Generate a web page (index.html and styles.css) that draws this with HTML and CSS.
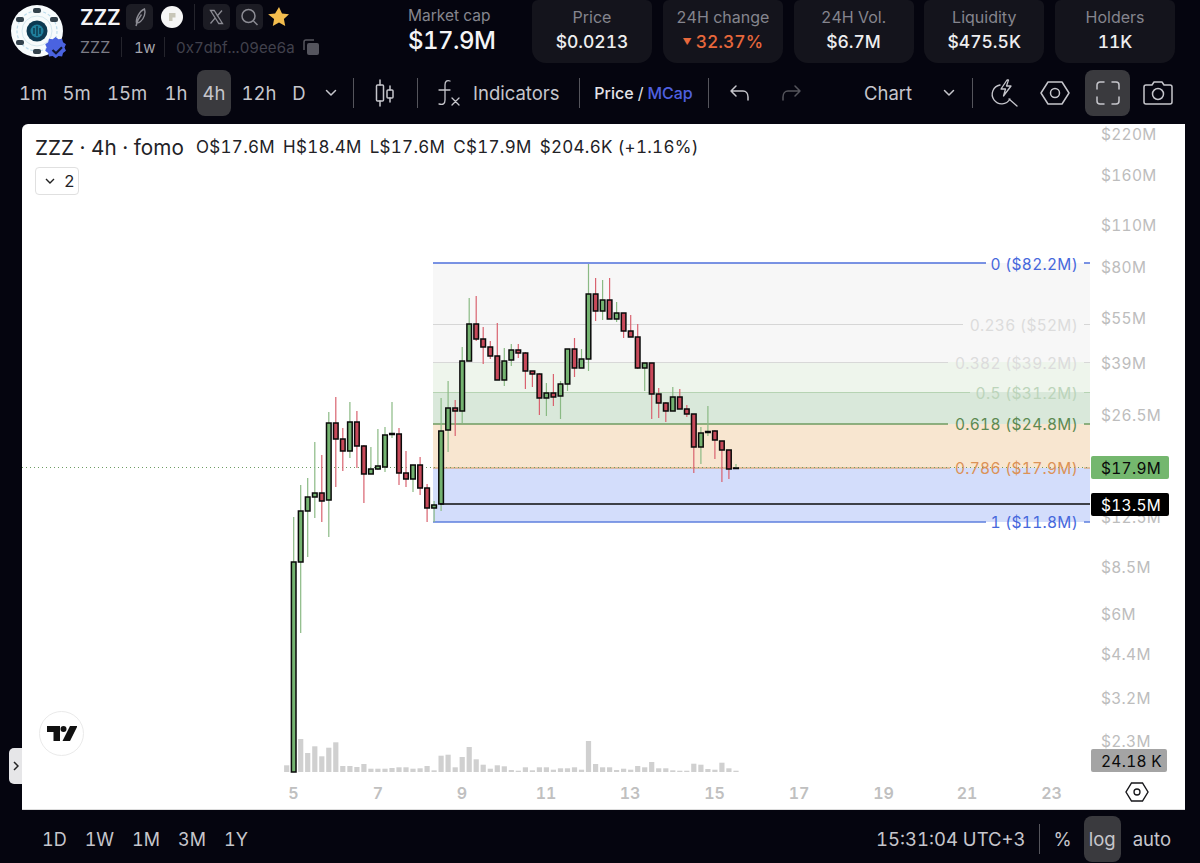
FILE: index.html
```html
<!DOCTYPE html>
<html lang="en">
<head>
<meta charset="utf-8">
<title>ZZZ chart</title>
<link rel="stylesheet" href="styles.css">
</head>
<body>
<header class="topbar">
  <div class="logo">
    <svg viewBox="0 0 56 56" width="56" height="56">
      <circle cx="26" cy="26" r="26" fill="#f7fbfc"/>
      <circle cx="26" cy="26" r="20" fill="none" stroke="#bcdcec" stroke-width="1.2" stroke-dasharray="3 2"/>
      <circle cx="26" cy="26" r="15" fill="none" stroke="#d5e8ef" stroke-width="1"/>
      <circle cx="26" cy="26" r="10.5" fill="#0d3a52"/>
      <circle cx="26" cy="26" r="6.5" fill="#1f7f9c"/>
      <path d="M26 21v10M23 23v6M29 23v6" stroke="#0a2a3c" stroke-width="1.2"/>
      <g fill="#33424c">
        <rect x="22" y="3" width="8" height="5" rx="2"/>
        <rect x="5" y="12" width="8" height="5" rx="2"/>
        <rect x="39" y="12" width="8" height="5" rx="2"/>
        <rect x="5" y="35" width="8" height="5" rx="2"/>
        <rect x="22" y="44" width="8" height="5" rx="2"/>
      </g>
      <path d="M47 34l3 2.300 3.700-.5 1 3.600 3 2.100-1.500 3.400 1.500 3.400-3 2.100-1 3.600-3.700-.5-3 2.300-3-2.300-3.700.5-1-3.600-3-2.100 1.500-3.400-1.500-3.400 3-2.100 1-3.600 3.700.5z" transform="translate(-1 -1) scale(.97)" fill="#4a63e0"/>
      <path d="M41.500 45l3.500 3.300 6-6" fill="none" stroke="#10152e" stroke-width="2.200"/>
    </svg>
  </div>
  <div class="token">
    <div class="token-top">
      <strong class="token-name">ZZZ</strong>
      <span class="icon-box">
        <svg viewBox="0 0 27 26" width="27" height="26"><path d="M18.500 5c1.500 4-.5 9.500-4 12.500-1.300 1.100-2.800 1.500-4 1.300-.9-4.300 3-11.800 8-13.800zM10 22c.9-4.500 3-8.500 5.500-11.500" fill="none" stroke="#8c8c94" stroke-width="1.400"/></svg>
      </span>
      <span class="icon-plain pump">
        <svg viewBox="0 0 22 22" width="22" height="22"><circle cx="11" cy="11" r="11" fill="#f6f6f6"/><path d="M8 7h6.500v4.500h-3V15H8z" fill="#c8c6b8"/></svg>
      </span>
      <i class="vline faint"></i>
      <span class="icon-box">
        <svg viewBox="0 0 27 26" width="27" height="26"><path d="M7.500 6.500h3.700l8.300 13h-3.700zM19 6.500l-5 5.700M12.300 13.800L7.500 19.500" fill="none" stroke="#8c8c94" stroke-width="1.300"/></svg>
      </span>
      <span class="icon-box">
        <svg viewBox="0 0 27 26" width="27" height="26"><circle cx="12.500" cy="12" r="6.500" fill="none" stroke="#8c8c94" stroke-width="1.500"/><path d="M17.500 17l4 4" stroke="#8c8c94" stroke-width="1.500"/></svg>
      </span>
      <span class="icon-plain star">
        <svg viewBox="0 0 22 22" width="22" height="22"><path d="M11 1l3 6.400 7 .9-5.100 4.800 1.300 6.900-6.200-3.400-6.200 3.400 1.300-6.900L.1 8.300l7-.9z" fill="#f3bd4e"/></svg>
      </span>
    </div>
    <div class="token-sub">
      <span class="sub-name">ZZZ</span>
      <i class="vline faint short"></i>
      <span class="sub-age">1w</span>
      <i class="vline faint short"></i>
      <span class="sub-addr">0x7dbf...09ee6a</span>
      <svg class="copy" viewBox="0 0 17 17" width="17" height="17"><path d="M1 11V3a2 2 0 0 1 2-2h8" fill="none" stroke="#55555e" stroke-width="1.500"/><rect x="4" y="4" width="12" height="12" rx="2" fill="#55555e"/></svg>
    </div>
  </div>
  <div class="mcap">
    <span class="mcap-label">Market cap</span>
    <span class="mcap-value">$17.9M</span>
  </div>
  <div class="cards">
    <div class="card"><span class="card-label">Price</span><span class="card-value">$0.0213</span></div>
    <div class="card"><span class="card-label">24H change</span><span class="card-value down"><small>▼</small>32.37%</span></div>
    <div class="card"><span class="card-label">24H Vol.</span><span class="card-value">$6.7M</span></div>
    <div class="card"><span class="card-label">Liquidity</span><span class="card-value">$475.5K</span></div>
    <div class="card"><span class="card-label">Holders</span><span class="card-value">11K</span></div>
  </div>
</header>

<nav class="toolbar">
  <span class="tool">1m</span>
  <span class="tool">5m</span>
  <span class="tool">15m</span>
  <span class="tool">1h</span>
  <span class="tool active">4h</span>
  <span class="tool">12h</span>
  <span class="tool">D</span>
  <span class="tool"><svg viewBox="0 0 12 8" width="12" height="8"><path d="M1.500 1.500L6 6l4.500-4.500" class="ln"/></svg></span>
  <i class="vline"></i>
  <span class="tool">
    <svg viewBox="0 0 24 30" width="24" height="30"><path d="M7 2v5M7 23v5M17 8v4M17 20v4" class="ln"/><rect x="3.500" y="7" width="7" height="16" rx="1" class="ln"/><rect x="14" y="12" width="6" height="8" rx="1" class="ln"/></svg>
  </span>
  <i class="vline"></i>
  <span class="tool indicators">
    <svg viewBox="0 0 28 30" width="28" height="30"><path d="M15 3c-3-1-5 0-5 4v15c0 4-2 5-6 4M4 12h11M17 20l7 7M24 20l-7 7" class="ln thin"/></svg>
    <span>Indicators</span>
  </span>
  <i class="vline"></i>
  <span class="tool price-switch"><b>Price</b> / <b class="blue">MCap</b></span>
  <i class="vline"></i>
  <span class="tool"><svg viewBox="0 0 22 18" width="22" height="18"><path d="M7 2L2 7l5 5M2 7h12c3 0 5 2.500 5 6v3" class="ln"/></svg></span>
  <span class="tool"><svg viewBox="0 0 22 18" width="22" height="18"><path d="M15 2l5 5-5 5M20 7H8c-3 0-5 2.500-5 6v3" class="ln dim"/></svg></span>
  <span class="tool chart-select">
    <span>Chart</span>
    <svg viewBox="0 0 12 8" width="12" height="8"><path d="M1.500 1.500L6 6l4.500-4.500" class="ln"/></svg>
  </span>
  <i class="vline"></i>
  <span class="tool"><svg viewBox="0 0 28 30" width="28" height="30"><path d="M10 7a9.500 9.500 0 1 0 10 14M19 21l8 7" class="ln thin"/><path d="M17 2l-6 9h4.500l-2 7 7.500-10h-4.500l2-6z" class="ln thin"/></svg></span>
  <span class="tool"><svg viewBox="0 0 30 26" width="30" height="26"><path d="M8 2h14l7 11-7 11H8L1 13z" class="ln"/><circle cx="15" cy="13" r="4.500" class="ln"/></svg></span>
  <span class="tool full active"><svg viewBox="0 0 24 24" width="24" height="24"><path d="M1 8V4a3 3 0 0 1 3-3h4M16 1h4a3 3 0 0 1 3 3v4M23 16v4a3 3 0 0 1-3 3h-4M8 23H4a3 3 0 0 1-3-3v-4" class="ln"/></svg></span>
  <span class="tool"><svg viewBox="0 0 30 26" width="30" height="26"><path d="M3 5h6l2-3h8l2 3h6a2 2 0 0 1 2 2v15a2 2 0 0 1-2 2H3a2 2 0 0 1-2-2V7a2 2 0 0 1 2-2z" class="ln"/><circle cx="15" cy="14" r="5.500" class="ln"/></svg></span>
</nav>

<main class="chart">
  <svg class="plot" viewBox="22 124 1163 686" width="1163" height="686">
    <g id="fib">
      <rect x="433" y="263" width="657" height="99" fill="#f7f7f7"/>
      <rect x="433" y="362" width="657" height="30" fill="#eef5ec"/>
      <rect x="433" y="392" width="657" height="32" fill="#d9e8da"/>
      <rect x="433" y="424" width="657" height="44" fill="#f8e6d0"/>
      <rect x="433" y="468" width="657" height="54" fill="#d3ddfb"/>
      <path d="M433 263H986M1084 263h6" stroke="#4f70dc" stroke-width="1.500" fill="none"/>
      <path d="M433 324.500H963M1084 324.500h6" stroke="#d6d6d6" fill="none"/>
      <path d="M433 362.500H948M1084 362.500h6" stroke="#d8d8d8" fill="none"/>
      <path d="M433 392.500H970M1084 392.500h6" stroke="#b6d3b3" fill="none"/>
      <path d="M433 424H948M1084 424h6" stroke="#6f9c61" stroke-width="1.500" fill="none"/>
      <path d="M433 468H950M1084 468h6" stroke="#d9985a" stroke-width="1.200" fill="none"/>
      <path d="M433 522H986M1084 522h6" stroke="#5f80de" stroke-width="1.500" fill="none"/>
    </g>
    <path d="M22 467.500H1090" stroke="#6c9c62" stroke-dasharray="1 3" fill="none"/>
    <g id="volume"></g>
    <g id="candles"></g>
    <path d="M440 504H1090" stroke="#0b0b0b" stroke-width="1.500" fill="none"/>

    <g class="fib-labels">
      <text x="1078" y="264" class="f0">0 ($82.2M)</text>
      <text x="1078" y="325" class="f236">0.236 ($52M)</text>
      <text x="1078" y="363" class="f382">0.382 ($39.2M)</text>
      <text x="1078" y="393" class="f5">0.5 ($31.2M)</text>
      <text x="1078" y="424.500" class="f618">0.618 ($24.8M)</text>
      <text x="1078" y="468.500" class="f786">0.786 ($17.9M)</text>
      <text x="1078" y="522.500" class="f0">1 ($11.8M)</text>
    </g>

    <g class="price-axis">
      <text x="1101" y="134">$220M</text>
      <text x="1101" y="175">$160M</text>
      <text x="1101" y="225">$110M</text>
      <text x="1101" y="267">$80M</text>
      <text x="1101" y="318">$55M</text>
      <text x="1101" y="363">$39M</text>
      <text x="1101" y="415">$26.5M</text>
      <text x="1101" y="517">$12.5M</text>
      <text x="1101" y="567">$8.5M</text>
      <text x="1101" y="614">$6M</text>
      <text x="1101" y="654">$4.4M</text>
      <text x="1101" y="698">$3.2M</text>
      <text x="1101" y="741">$2.3M</text>
    </g>
    <rect x="1091" y="456" width="78" height="23" rx="2" fill="#74b76e"/>
    <text x="1101" y="468" class="tag">$17.9M</text>
    <rect x="1091" y="493" width="78" height="23" rx="2" fill="#000"/>
    <text x="1101" y="505" class="tag light">$13.5M</text>
    <rect x="1091" y="749" width="76" height="23" rx="2" fill="#a4a4a4"/>
    <text x="1101" y="761" class="tag">24.18 K</text>

    <g class="time-axis">
      <text x="293.500" y="792.500">5</text>
      <text x="378" y="792.500">7</text>
      <text x="462" y="792.500">9</text>
      <text x="546" y="792.500">11</text>
      <text x="630" y="792.500">13</text>
      <text x="714.500" y="792.500">15</text>
      <text x="799" y="792.500">17</text>
      <text x="883.500" y="792.500">19</text>
      <text x="967" y="792.500">21</text>
      <text x="1051.500" y="792.500">23</text>
    </g>
    <path d="M1132 783h11l5.500 9-5.500 9h-11l-5.500-9z" fill="none" stroke="#16161a" stroke-width="1.400" transform="translate(-.5 0)"/>
    <circle cx="1137" cy="792" r="3" fill="none" stroke="#16161a" stroke-width="1.300"/>
  </svg>

  <div class="legend">
    <div class="legend-line">
      <span class="legend-title">ZZZ · 4h · fomo</span>
      <span class="legend-ohlc">O$17.6M</span>
      <span class="legend-ohlc">H$18.4M</span>
      <span class="legend-ohlc">L$17.6M</span>
      <span class="legend-ohlc">C$17.9M</span>
      <span class="legend-ohlc">$204.6K (+1.16%)</span>
    </div>
    <div class="legend-toggle">
      <svg viewBox="0 0 10 6" width="10" height="6"><path d="M1 1l4 4 4-4" fill="none" stroke="#222" stroke-width="1.400"/></svg>
      <span>2</span>
    </div>
  </div>

  <div class="tv-badge">
    <svg viewBox="0 0 30 15" width="30" height="15"><path d="M0 0h13v15H6.500V6H0zM23 0h7.500L23 15h-7.500z" fill="#111"/><circle cx="16.500" cy="3" r="3" fill="#111"/></svg>
  </div>
</main>
<span class="side-tab"><svg viewBox="0 0 6 10" width="6" height="10"><path d="M1 1l4 4-4 4" fill="none" stroke="#222" stroke-width="1.500"/></svg></span>

<footer class="bottombar">
  <div class="ranges">
    <span>1D</span><span>1W</span><span>1M</span><span>3M</span><span>1Y</span>
  </div>
  <div class="bottom-right">
    <span class="clock">15:31:04 UTC+3</span>
    <i class="vline"></i>
    <span class="opt">%</span>
    <span class="opt active">log</span>
    <span class="opt">auto</span>
  </div>
</footer>
<script src="chart.js"></script>
</body>
</html>
```

FILE: styles.css
```css
* { box-sizing: border-box; }
html, body { margin: 0; padding: 0; }
body {
  width: 1200px;
  height: 863px;
  overflow: hidden;
  position: relative;
  background: #05050f;
  color: #cfcfd4;
  font-family: Inter, "Liberation Sans", sans-serif;
  font-variant-numeric: tabular-nums;
}
.vline { display: block; width: 1px; height: 30px; background: #55555c; justify-self: center; }
.vline.faint { background: #24242c; height: 26px; }
.vline.short { height: 20px; }

/* Header */
.topbar { display: flex; height: 63px; padding-left: 11px; }
.logo { width: 56px; height: 62px; padding-top: 5px; flex: none; }
.token { width: 328px; margin-left: 13px; flex: none; }
.token-top { display: flex; align-items: center; height: 26px; margin-top: 4px; }
.token-name { font-size: 21px; font-weight: 600; color: #f4f4f6; width: 46px; letter-spacing: -.2px; }
.icon-box { width: 27px; height: 26px; background: #1c1c24; border-radius: 5px; display: flex; margin-right: 6px; }
.icon-plain { width: 22px; height: 22px; display: flex; }
.icon-plain.pump { margin: 0 11px 0 2px; }
.icon-plain.star { margin-left: -1px; }
.token-top .vline { margin-right: 8px; }
.token-sub { display: flex; align-items: center; height: 20px; margin-top: 7px; font-size: 16px; }
.sub-name { color: #7c7c86; width: 41px; }
.sub-age { color: #a4a4ac; margin: 0 12px; width: 18px; letter-spacing: -.6px; font-size: 15px; }
.sub-addr { color: #41414c; margin-left: 11px; width: 127px; font-size: 15px; white-space: nowrap; }
.copy { flex: none; }
.mcap { width: 124px; flex: none; display: flex; flex-direction: column; padding-top: 6px; }
.mcap-label { font-size: 15.500px; line-height: 19px; color: #85858e; }
.mcap-value { font-size: 24px; line-height: 32px; font-weight: 500; color: #f4f4f6; letter-spacing: -.5px; }
.cards { display: flex; gap: 10.750px; }
.card {
  width: 120px;
  height: 63px;
  background: #14141c;
  border-radius: 6px 6px 14px 14px;
  display: flex;
  flex-direction: column;
  align-items: center;
  padding-top: 8px;
}
.card-label { font-size: 16px; line-height: 19px; color: #85858e; }
.card-value { font-size: 17.500px; line-height: 28px; margin-top: 1px; font-weight: 500; color: #eeeef0; }
.card-value.down { color: #e8683c; }
.card-value small { font-size: 9px; margin-right: 4px; vertical-align: 3px; }

/* Toolbar */
.toolbar {
  display: grid;
  grid-template-columns: 42px 45px 56px 42px 34px 56px 24px 40px 4px 60px 4px 158px 4px 125px 4px 60px 42px 158px 4px 60px 42px 54px 56px;
  align-items: center;
  height: 46px;
  margin: 7px 0 8px;
  padding-left: 12px;
  font-size: 18.500px;
}
.tool { display: flex; align-items: center; justify-content: center; height: 46px; color: #c6c6cc; }
.tool.active { background: #3a3a3e; border-radius: 8px; }
.tool.full { width: 45px; justify-self: end; }
.indicators { justify-content: flex-start; padding-left: 16px; gap: 10px; }
.price-switch { gap: 4px; font-size: 16px; color: #e4e4e8; }
.price-switch b { font-weight: 500; }
.blue { color: #4f60e0; }
.chart-select { justify-content: flex-start; padding-left: 52px; gap: 31px; }
.ln { fill: none; stroke: #c6c6cc; stroke-width: 1.500; stroke-linecap: round; stroke-linejoin: round; }
.ln.thin { stroke-width: 1.300; }
.ln.dim { stroke: #55555c; }

/* Chart */
.chart {
  position: relative;
  width: 1163px;
  height: 686px;
  margin-left: 22px;
  background: #fff;
  border-top-left-radius: 6px;
  overflow: hidden;
  box-shadow: inset 0 -1px 0 #dcdcdc;
}
.plot { display: block; }
.plot text { font-family: Inter, "Liberation Sans", sans-serif; dominant-baseline: central; font-variant-numeric: tabular-nums; }
.fib-labels text { font-size: 15.500px; text-anchor: end; letter-spacing: .3px; }
.f0 { fill: #4668dc; }
.f236 { fill: #dcdcdc; }
.f382 { fill: #dcdcdc; }
.f5 { fill: #bcd4ba; }
.f618 { fill: #5d8a52; }
.f786 { fill: #dc9257; }
.price-axis text { font-size: 15.500px; fill: #bdbdbd; letter-spacing: .3px; }
.tag { font-size: 15.500px; fill: #0a0a0a; letter-spacing: .3px; }
.tag.light { fill: #fff; }
.time-axis text { font-size: 16px; font-weight: 600; fill: #c0c0c0; text-anchor: middle; }
.wick-up { stroke: #8aba84; stroke-width: 1.200; }
.wick-down { stroke: #d9626f; stroke-width: 1.200; }
.body-up { fill: #74b370; stroke: #0a0a0a; stroke-width: 1.500; }
.body-down { fill: #c8495a; stroke: #0a0a0a; stroke-width: 1.500; }
.vol { fill: #d0d0d0; }

.legend { position: absolute; left: 13px; top: 9px; color: #222226; }
.legend-line { display: flex; align-items: center; gap: 8px; height: 28px; }
.legend-title { font-size: 20.700px; margin-right: 3px; width: 150px; white-space: nowrap; }
.legend-ohlc { font-size: 17px; white-space: nowrap; letter-spacing: .3px; }
.legend-toggle {
  display: flex;
  align-items: center;
  gap: 9px;
  width: 44px;
  height: 28px;
  margin-top: 6px;
  padding-left: 9px;
  border: 1px solid #e0e0e0;
  border-radius: 4px;
  font-size: 16.500px;
}
.tv-badge {
  position: absolute;
  left: 17px;
  top: 587px;
  width: 45px;
  height: 45px;
  border: 1px solid #eaeaea;
  border-radius: 50%;
  display: flex;
  align-items: center;
  justify-content: center;
}
.side-tab {
  position: absolute;
  left: 9px;
  top: 748px;
  width: 13px;
  height: 36px;
  background: #e6e6e8;
  border-radius: 5px 0 0 5px;
  display: flex;
  align-items: center;
  justify-content: center;
}

/* Footer */
.bottombar {
  display: flex;
  justify-content: space-between;
  align-items: center;
  height: 53px;
  padding: 5px 29px 0 42px;
  font-size: 18.500px;
  color: #c6c6cc;
}
.ranges { display: flex; gap: 18px; font-size: 18px; }
.bottom-right { display: flex; align-items: center; }
.clock { margin-right: 13px; }
.bottom-right .vline { margin-right: 14px; }
.opt { display: flex; align-items: center; justify-content: center; height: 46px; }
.opt.active { width: 37px; margin: 0 12px; background: #3a3a3e; border-radius: 8px; }
```

FILE: chart.js
```js
// [up, bodyTop, bodyBottom, wickTop, wickBottom]
const candles = [
  [1,562,772,517,772],[1,511,562,485,633],[1,497,511,478,557],[1,493,497,442,518],
  [0,493,501,455,522],[1,423,500,412,537],[0,423,439,397,487],[0,439,451,428,471],
  [1,422,451,402,458],[0,422,446,411,468],[0,446,474,445,503],[1,469,474,447,474],
  [1,466,469,429,470],[1,435,467,427,472],[1,433.500,434.500,402,438],[0,434,473,428,485],
  [0,473,479,451,487],[1,465,479,465,492],[0,465,488,457,495],[0,488,508,484,522],
  [1,505,508,501,522],[1,431,504,398,511],[1,408,430,381,452],[0,408,411,400,436],
  [1,361,411,347,423],[1,324,361,298,361],[0,324,339,296,341],[0,339,347,327,364],
  [0,347,356,341,359],[0,356,380,323,380],[1,361,380,348,386],[1,350,360,344,366],
  [0,350,353,344,358],[0,353,371,352,389],[0,371,374,371,387],[0,374,398,373,415],
  [1,393,398,383,416],[0,393,397,374,406],[1,384,396,381,419],[1,349,384,349,391],
  [0,349,368,338,377],[1,359,368,349,368],[1,294,359,264,371],[0,294,311,278,321],
  [1,300,311,280,320],[0,300,319,278,319],[1,313,319,302,322],[0,313,331,313,338],
  [0,331,337,315,337],[0,337,368,324,369],[1,363,368,363,391],[0,363,394,363,419],
  [0,394,403,388,418],[0,403,411,402,422],[1,397,411,387,411],[0,397,409,389,409],
  [0,409,414,405,417],[0,414,447,414,473],[1,433,447,427,464],[1,431.500,432.500,406,436],
  [0,431,440,430,459],[0,441,450,441,482],[0,450,469,450,479],[1,468,468.500,464,469]
];
const volumes = [
  6.700,14,33,19,25.700,15.700,24.300,29.700,6,6,5,8,3.300,3.300,3.300,4,4.700,4.700,3.300,3.700,
  6,1.700,16.300,17.300,4.700,15,25,12.700,7.300,3.300,6.700,5.700,2,1.300,
  4.700,1.700,4.700,4.700,2.300,3.700,3.700,4.700,2.300,31,8,4.700,4.700,2,3.300,2.300,6,4.700,10,
  3.700,3.700,1.700,1.300,1.300,8.300,7.300,3,2.300,9.300,3.700,1.300
];
const NS = 'http://www.w3.org/2000/svg';
const STEP = 7.02;
const X0 = 293.7;

function el(parent, tag, attrs) {
  const node = document.createElementNS(NS, tag);
  Object.entries(attrs).forEach(([k, v]) => node.setAttribute(k, v));
  parent.appendChild(node);
}

const vol = document.getElementById('volume');
volumes.forEach((h, i) => {
  el(vol, 'rect', { class: 'vol', x: (X0 + (i - 1) * STEP - 2.6).toFixed(1), y: (772 - h).toFixed(1), width: 5.2, height: h });
});

const layer = document.getElementById('candles');
candles.forEach(([up, top, bot, wt, wb], i) => {
  const x = X0 + i * STEP;
  el(layer, 'line', { class: up ? 'wick-up' : 'wick-down', x1: x.toFixed(1), x2: x.toFixed(1), y1: wt, y2: wb });
  el(layer, 'rect', { class: up ? 'body-up' : 'body-down', x: (x - 2.3).toFixed(1), y: top, width: 4.6, height: Math.max(bot - top, 0.5) });
});
```
